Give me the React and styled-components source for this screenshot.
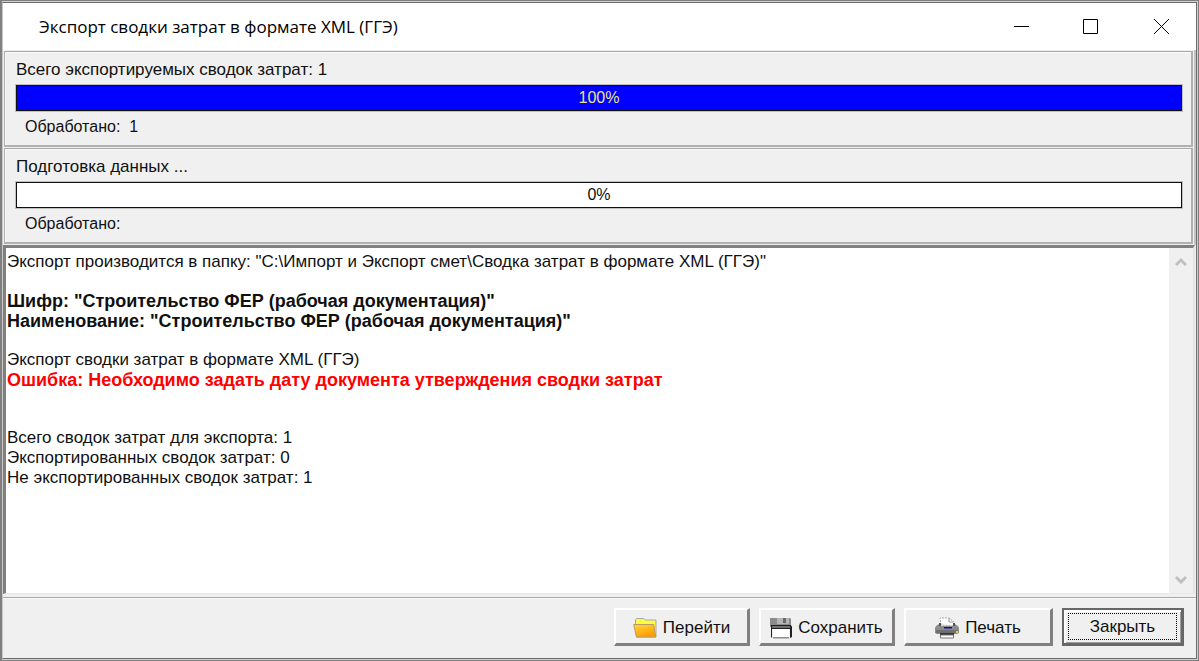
import React from 'react'
import styled, { createGlobalStyle } from 'styled-components'

const GlobalStyle = createGlobalStyle`
    * {
        box-sizing: border-box;
    }
    body {
        margin: 0;
        background: #f0f0f0;
        font-family: "Liberation Sans", Arial, sans-serif;
    }
`

const Frame = styled.div`
    height: 100vh;
    padding: 1px;
    background: #d0d0d0;
    border: 1px solid #808080;
    border-left-width: 2px;
    padding-left: 0;
`

const Window = styled.main`
    display: flex;
    flex-direction: column;
    height: 100%;
    border: 1px solid #6c6c6c;
    border-left-color: #c8c8c8;
    background: #f0f0f0;
    color: #101010;
    font-size: 17px;
    line-height: 20px;
`

const TitleBar = styled.header`
    display: flex;
    align-items: center;
    justify-content: space-between;
    flex: none;
    height: 47px;
    padding-left: 36px;
    background: #fff;
`

const Title = styled.h1`
    margin: 0;
    color: #000;
    font-family: "Open Sans", "Noto Sans", sans-serif;
    font-size: 17px;
    font-weight: 400;
    line-height: 24px;
`

const WindowButtons = styled.div`
    display: flex;
    height: 100%;
`

const WindowButton = styled.button`
    display: flex;
    align-items: center;
    justify-content: center;
    width: 70px;
    padding: 0;
    border: none;
    background: none;
`

const Groups = styled.div`
    display: flex;
    flex-direction: column;
    flex: none;
    gap: 1px;
    padding: 1px 1px 1px;
    border-right: 2px solid #c4c4c4;
`

const Group = styled.section`
    height: 96px;
    padding: 8px 9px 0 11px;
    border: 2px solid #b0b0b0;
    border-top: 1px solid #a8a8a8;
    border-left-width: 1px;
    box-shadow: inset 1px 1px 0 #fafafa;
`

const Caption = styled.div`
    margin-bottom: 5px;
`

const Track = styled.div`
    display: grid;
    height: 26px;
    border: 1px solid #101010;
    box-shadow: 0 0 0 1px #c0c0c0;
    background: #fff;
`

const Fill = styled.div`
    grid-area: 1 / 1;
    background: #0000ff;
`

const Percent = styled.span`
    grid-area: 1 / 1;
    text-align: center;
    font-size: 16px;
    line-height: 24px;
    color: ${props => props.$full ? "#e8e880" : "#101010"};
`

const Processed = styled.div`
    display: flex;
    gap: 9px;
    padding: 6px 0 0 9px;
    font-size: 16px;
`

const Log = styled.section`
    display: flex;
    flex: 1;
    min-height: 0;
    margin-right: 1px;
    border: 3px solid #808080;
    border-right: 2px solid #e4e4e4;
    border-bottom: 1px solid #e8e8e8;
    background: #fff;
`

const LogText = styled.div`
    flex: 1;
    padding: 4px 0 0 1px;
    overflow: hidden;
`

const Paragraph = styled.p`
    margin: 0 0 ${props => props.$wide ? "38px" : "19px"};
`

const Line = styled.span`
    display: block;
    white-space: nowrap;
    font-size: ${props => props.$bold ? "18px" : "17px"};
    font-weight: ${props => props.$bold ? 700 : 400};
    color: ${props => props.$error ? "#ff0000" : "inherit"};
`

const ScrollBar = styled.div`
    display: flex;
    flex-direction: column;
    justify-content: space-between;
    width: 24px;
    background: #f0f0f0;
`

const ScrollButton = styled.button`
    display: flex;
    align-items: center;
    justify-content: center;
    height: 28px;
    padding: 0;
    border: none;
    background: none;
`

const Footer = styled.footer`
    display: flex;
    flex: none;
    gap: 9px;
    justify-content: flex-end;
    height: 61px;
    margin-top: 3px;
    padding: 10px 12px 0 0;
    border-top: 1px solid #a8a8a8;
    box-shadow: inset 0 1px 0 #fafafa;
`

const Button = styled.button`
    display: flex;
    align-items: center;
    justify-content: center;
    gap: 6px;
    width: ${props => props.$wide ? "149px" : "136px"};
    height: 38px;
    padding: 3px 0 0;
    border: solid;
    border-width: 2px 3px 3px 2px;
    border-color: #fff #808080 #808080 #fff;
    background: #f0f0f0;
    color: #101010;
    font-family: inherit;
    font-size: 17px;
    line-height: 22px;
`

const CloseButton = styled(Button)`
    width: 122px;
    padding: 0;
    border: 2px solid #686868;
    border-right-width: 3px;
    border-bottom-width: 3px;
    box-shadow: inset 2px 2px 0 #fff, inset -1px -1px 0 #a0a0a0;
`

const FocusBox = styled.span`
    display: flex;
    align-items: center;
    justify-content: center;
    width: 109px;
    height: 27px;
    border: 1px dotted #000;
`

const FolderIcon = () => (
    <svg width="24" height="22" viewBox="0 0 24 22" aria-hidden="true">
        <defs>
            <linearGradient id="flap" x1="0" y1="0" x2=".5" y2="1">
                <stop offset="0" stopColor="#ffd83c" />
                <stop offset="1" stopColor="#ff9c00" />
            </linearGradient>
        </defs>
        <path d="M2.500 8V2.500l1-1h7l2 1.500h10.500v17H3.500z" fill="#fff36a" stroke="#a8a8a0" />
        <path d="M4 3h6l2 2h10v3H4z" fill="#fbff3a" />
        <path d="M.7 7.500h20l2 12.500H3.500z" fill="url(#flap)" stroke="#b99a66" />
    </svg>
)

const DiskIcon = () => (
    <svg width="22" height="22" viewBox="0 0 22 22" aria-hidden="true">
        <path d="M0 1h20l1 1v8H0z" fill="#8c8c8c" />
        <path d="M7 1h12v6H7z" fill="#b4b4b4" />
        <path d="M13 1h3v5h-3z" fill="#6a6a6a" />
        <path d="M1 8h20l1 2v10l-2 1v-9H2v9l-1-1V10z" fill="#202020" />
        <path d="M2 9h18v2H2z" fill="#707070" />
        <path d="M3 12h16v8H3z" fill="#fff" />
        <path d="M3 20h16v1.500H3z" fill="#8c8c8c" />
    </svg>
)

const PrinterIcon = () => (
    <svg width="24" height="22" viewBox="0 0 24 22" aria-hidden="true">
        <path d="M6 8L5 1h9l5 4v4z" fill="#fff" stroke="#aaa" strokeDasharray="2 1" />
        <path d="M14 1v4h4" fill="none" stroke="#999" />
        <path d="M1 9l3-2h2v2h12V7h2l3 2 1 2v5l-2 1H2l-2-1v-5z" fill="#8c8c8c" />
        <path d="M4 6h2v3H4zM18 6h2v3h-2z" fill="#555" />
        <path d="M9 10h8v1.500H9z" fill="#10109c" />
        <path d="M1 13h22v3H1z" fill="#707070" />
        <path d="M5 16h14v2H5z" fill="#333" />
        <path d="M5.500 18h13v3h-13z" fill="#fff" stroke="#777" />
        <path d="M21 14h2v2h-2z" fill="#e2d43c" />
    </svg>
)

const ChevronIcon = ({ down }) => (
    <svg width="12" height="10" viewBox="0 0 12 10" aria-hidden="true">
        <path d={down ? "M1 3l5 5 5-5" : "M1 8l5-5 5 5"} fill="none" stroke="#bfbfbf" strokeWidth="3" />
    </svg>
)

const ProgressGroup = ({ caption, value, processed }) => (
    <Group>
        <Caption>{caption}</Caption>
        <Track role="progressbar" aria-label={caption} aria-valuenow={value} aria-valuemin={0} aria-valuemax={100}>
            <Fill style={{ width: `${value}%` }} />
            <Percent $full={value > 50}>{value}%</Percent>
        </Track>
        <Processed>
            <span>Обработано:</span>
            <span>{processed}</span>
        </Processed>
    </Group>
)

const App = () => {
  return (
    <Frame>
        <GlobalStyle />
        <Window>
            <TitleBar>
                <Title>Экспорт сводки затрат в формате XML (ГГЭ)</Title>
                <WindowButtons>
                    <WindowButton type="button" aria-label="Свернуть">
                        <svg width="15" height="16"><path d="M0 7.500h15" stroke="#000" /></svg>
                    </WindowButton>
                    <WindowButton type="button" aria-label="Развернуть">
                        <svg width="16" height="16"><path d="M.5.5h14v14H.5z" fill="none" stroke="#000" /></svg>
                    </WindowButton>
                    <WindowButton type="button" aria-label="Закрыть окно">
                        <svg width="15" height="15"><path d="M0 0l15 15M15 0L0 15" stroke="#000" /></svg>
                    </WindowButton>
                </WindowButtons>
            </TitleBar>
            <Groups>
                <ProgressGroup caption="Всего экспортируемых сводок затрат: 1" value={100} processed="1" />
                <ProgressGroup caption="Подготовка данных ..." value={0} />
            </Groups>
            <Log>
                <LogText>
                    <Paragraph>
                        <Line>Экспорт производится в папку: "C:\Импорт и Экспорт смет\Сводка затрат в формате XML (ГГЭ)"</Line>
                    </Paragraph>
                    <Paragraph>
                        <Line $bold>Шифр: "Строительство ФЕР (рабочая документация)"</Line>
                        <Line $bold>Наименование: "Строительство ФЕР (рабочая документация)"</Line>
                    </Paragraph>
                    <Paragraph $wide>
                        <Line>Экспорт сводки затрат в формате XML (ГГЭ)</Line>
                        <Line $bold $error>Ошибка: Необходимо задать дату документа утверждения сводки затрат</Line>
                    </Paragraph>
                    <Paragraph>
                        <Line>Всего сводок затрат для экспорта: 1</Line>
                        <Line>Экспортированных сводок затрат: 0</Line>
                        <Line>Не экспортированных сводок затрат: 1</Line>
                    </Paragraph>
                </LogText>
                <ScrollBar>
                    <ScrollButton type="button" aria-label="Вверх"><ChevronIcon /></ScrollButton>
                    <ScrollButton type="button" aria-label="Вниз"><ChevronIcon down /></ScrollButton>
                </ScrollBar>
            </Log>
            <Footer>
                <Button type="button"><FolderIcon />Перейти</Button>
                <Button type="button"><DiskIcon />Сохранить</Button>
                <Button type="button" $wide><PrinterIcon />Печать</Button>
                <CloseButton type="button"><FocusBox>Закрыть</FocusBox></CloseButton>
            </Footer>
        </Window>
    </Frame>
  )
}

export default App
